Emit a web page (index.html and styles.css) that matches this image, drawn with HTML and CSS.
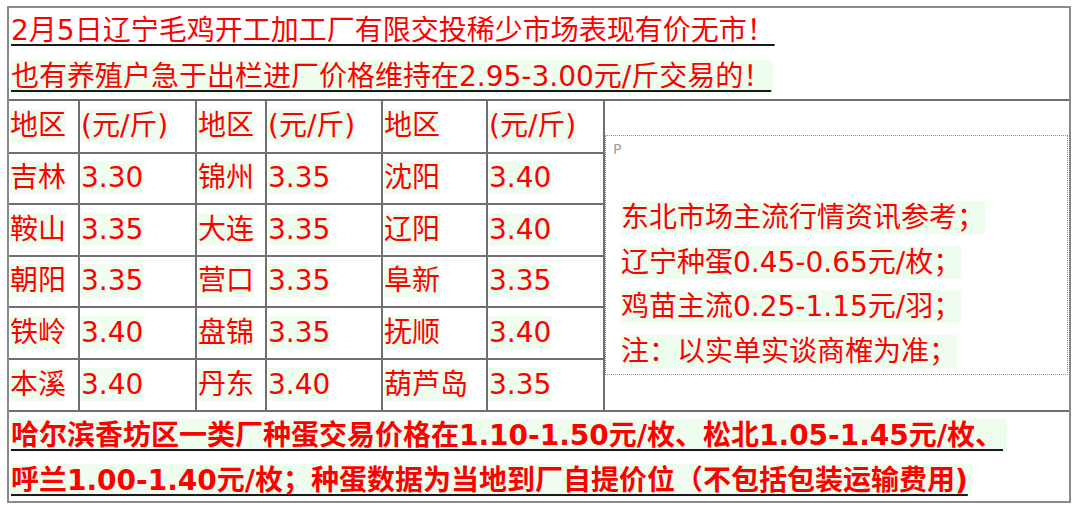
FILE: index.html
```html
<!DOCTYPE html>
<html lang="zh-CN">
<head>
<meta charset="utf-8">
<title>东北毛鸡行情</title>
<link rel="stylesheet" href="styles.css">
</head>
<body>
<div class="sheet">
  <div class="head">
    <p class="line"><span class="u">2月5日辽宁毛鸡开工加工厂有限交投稀少市场表现有价无市！</span></p>
    <p class="line"><span class="u hl">也有养殖户急于出栏进厂价格维持在2.95-3.00元/斤交易的！</span></p>
  </div>
  <table class="grid">
    <colgroup>
      <col class="c1"><col class="c2"><col class="c3"><col class="c4"><col class="c5"><col class="c6"><col class="c7">
    </colgroup>
    <tr>
      <td><span class="hl">地区</span></td><td><span class="hl">(元/斤)</span></td>
      <td><span class="hl">地区</span></td><td><span class="hl">(元/斤)</span></td>
      <td><span class="hl">地区</span></td><td><span class="hl">(元/斤)</span></td>
      <td class="side" rowspan="6">
        <div class="note">
          <div class="mark">P</div>
          <p class="nl"><span class="hl">东北市场主流行情资讯参考；</span></p>
          <p class="nl"><span class="hl">辽宁种蛋0.45-0.65元/枚；</span></p>
          <p class="nl"><span class="hl">鸡苗主流0.25-1.15元/羽；</span></p>
          <p class="nl"><span class="hl">注：以实单实谈商榷为准；</span></p>
        </div>
      </td>
    </tr>
    <tr>
      <td><span class="hl">吉林</span></td><td><span class="hl">3.30</span></td>
      <td><span class="hl">锦州</span></td><td><span class="hl">3.35</span></td>
      <td><span class="hl">沈阳</span></td><td><span class="hl">3.40</span></td>
    </tr>
    <tr>
      <td><span class="hl">鞍山</span></td><td><span class="hl">3.35</span></td>
      <td><span class="hl">大连</span></td><td><span class="hl">3.35</span></td>
      <td><span class="hl">辽阳</span></td><td><span class="hl">3.40</span></td>
    </tr>
    <tr>
      <td><span class="hl">朝阳</span></td><td><span class="hl">3.35</span></td>
      <td><span class="hl">营口</span></td><td><span class="hl">3.35</span></td>
      <td><span class="hl">阜新</span></td><td><span class="hl">3.35</span></td>
    </tr>
    <tr>
      <td><span class="hl">铁岭</span></td><td><span class="hl">3.40</span></td>
      <td><span class="hl">盘锦</span></td><td><span class="hl">3.35</span></td>
      <td><span class="hl">抚顺</span></td><td><span class="hl">3.40</span></td>
    </tr>
    <tr>
      <td><span class="hl">本溪</span></td><td><span class="hl">3.40</span></td>
      <td><span class="hl">丹东</span></td><td><span class="hl">3.40</span></td>
      <td><span class="hl">葫芦岛</span></td><td><span class="hl">3.35</span></td>
    </tr>
  </table>
  <div class="foot">
    <p class="fline"><span class="u hl">哈尔滨香坊区一类厂种蛋交易价格在1.10-1.50元/枚、松北1.05-1.45元/枚、</span></p>
    <p class="fline"><span class="u hl">呼兰1.00-1.40元/枚；种蛋数据为当地到厂自提价位（不包括包装运输费用)</span></p>
  </div>
</div>
</body>
</html>
```

FILE: styles.css
```css
html, body {
  margin: 0;
  padding: 0;
  background: #ffffff;
}

body {
  font-family: "DejaVu Sans", "Noto Sans CJK SC", sans-serif;
  color: #ff0000;
  font-size: 28px;
}

.sheet {
  margin: 6px 0 0 7px;
  width: 1064px;
  height: 497px;
  box-sizing: border-box;
  border: 2px solid #8a8a8a;
  display: flex;
  flex-direction: column;
}

p {
  margin: 0;
}

.head {
  height: 93px;
  flex: none;
  box-sizing: border-box;
  border-bottom: 2px solid #6e6e6e;
  padding: 0 0 0 2px;
}

.line {
  height: 45.5px;
  line-height: 45.5px;
  white-space: nowrap;
}

.u {
  text-decoration: underline;
  text-decoration-color: #1a1a1a;
  text-decoration-thickness: 2px;
  text-underline-offset: 4px;
  text-decoration-skip-ink: none;
  padding-right: 2px;
}

.hl {
  background: #effdef;
}

.grid {
  width: 100%;
  flex: none;
  border-collapse: collapse;
  border-style: hidden;
  table-layout: fixed;
}

.c1 { width: 70px; }
.c2 { width: 117px; }
.c3 { width: 70px; }
.c4 { width: 116px; }
.c5 { width: 105px; }
.c6 { width: 117px; }
.c7 { width: auto; }

.grid td {
  border: 2px solid #707070;
  height: 51.5px;
  box-sizing: border-box;
  padding: 0 0 0 1px;
  white-space: nowrap;
  vertical-align: middle;
  line-height: 32px;
}

.grid td.side {
  vertical-align: top;
  padding: 34px 1px 0 0;
}

.note {
  height: 240px;
  box-sizing: border-box;
  border: 1px dotted #8a8a8a;
  padding: 0 0 0 15px;
}

.mark {
  font-size: 14px;
  line-height: 16px;
  color: #a0a0a0;
  margin: 5px 0 0 -8px;
  height: 55px;
}

.nl {
  height: 44.5px;
  line-height: 44.5px;
}

.foot {
  flex: 1;
  border-top: 2px solid #6e6e6e;
  padding: 2px 0 0 2px;
  font-weight: bold;
}

.fline {
  height: 44.5px;
  line-height: 44.5px;
  white-space: nowrap;
}

.foot .u {
  padding-right: 4px;
}
```
